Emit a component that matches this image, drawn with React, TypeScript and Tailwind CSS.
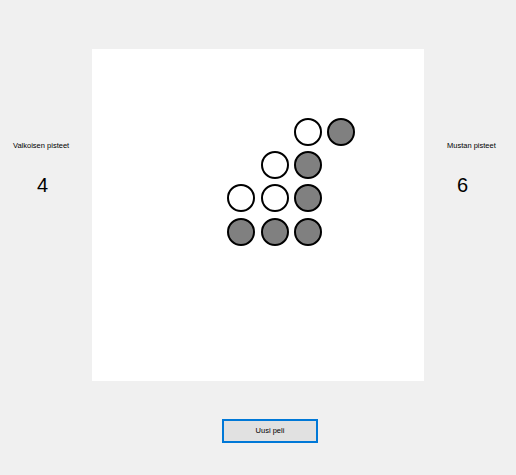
import React from "react";

const board: Record<string, "w" | "b"> = {
  "2-6": "w",
  "2-7": "b",
  "3-5": "w",
  "3-6": "b",
  "4-4": "w",
  "4-5": "w",
  "4-6": "b",
  "5-4": "b",
  "5-5": "b",
  "5-6": "b",
};

export default function App() {
  const cells = [];
  for (let r = 0; r < 10; r++) {
    for (let c = 0; c < 10; c++) {
      const v = board[`${r}-${c}`];
      cells.push(
        <div key={`${r}-${c}`} className="flex items-center justify-center">
          {v === "w" && (
            <div className="w-[28px] h-[28px] rounded-full border-2 border-black bg-white" />
          )}
          {v === "b" && (
            <div className="w-[28px] h-[28px] rounded-full border-2 border-black bg-[#808080]" />
          )}
        </div>
      );
    }
  }
  return (
    <div
      className="w-[516px] h-[475px] bg-[#f0f0f0] flex flex-col text-black"
      style={{ fontFamily: '"Liberation Sans", Arial, sans-serif' }}
    >
      <div className="flex items-start h-[381px]">
        <div className="w-[92px] flex flex-col pt-[142px]">
          <div className="ml-[13px] text-[7.5px] leading-[8px] text-black">Valkoisen pisteet</div>
          <div className="ml-[37px] mt-[25px] text-[20px] leading-[20px]">4</div>
        </div>
        <div className="mt-[49px] w-[332px] h-[332px] bg-white grid grid-cols-10 grid-rows-10">
          {cells}
        </div>
        <div className="w-[92px] flex flex-col pt-[142px]">
          <div className="ml-[23px] text-[7.5px] leading-[8px] text-black">Mustan pisteet</div>
          <div className="ml-[33px] mt-[25px] text-[20px] leading-[20px]">6</div>
        </div>
      </div>
      <div className="mt-[38px] ml-[222px]">
        <button className="w-[96px] h-[24px] bg-[#e1e1e1] border-2 border-[#0078d7] flex items-center justify-center text-[7.5px] text-black">
          Uusi peli
        </button>
      </div>
    </div>
  );
}
